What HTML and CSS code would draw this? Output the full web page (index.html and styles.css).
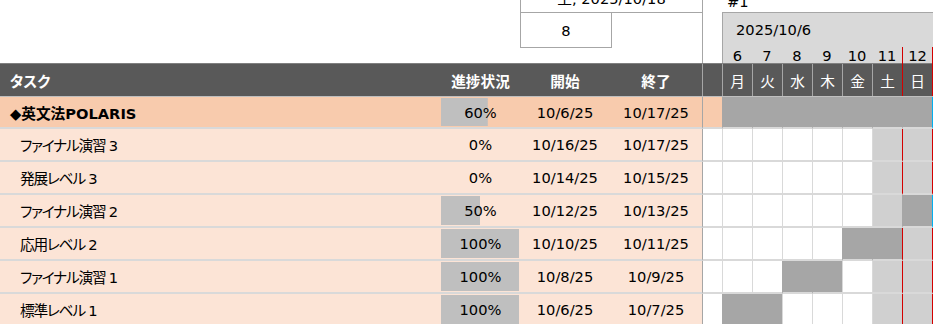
FILE: index.html
```html
<!DOCTYPE html>
<html lang="ja">

<head>
    <meta charset="UTF-8">
    <meta name="viewport" content="width=device-width, initial-scale=1.0">
    <title>ガントチャート</title>
    <link rel="stylesheet" href="styles.css">
</head>

<body>
    <div class="sheet">
        <div class="top">
            <div class="info">
                <div class="info-date"><span>土, 2025/10/18</span></div>
                <div class="info-count">8</div>
            </div>
            <div class="cal">
                <div class="cal-id"><span>#1</span></div>
                <div class="cal-box">
                    <div class="cal-start">2025/10/6</div>
                    <div class="cal-days">
                        <span>6</span><span>7</span><span>8</span><span>9</span><span>10</span><span>11</span><span class="sun">12</span>
                    </div>
                </div>
            </div>
        </div>

        <div class="row head">
            <div class="task">タスク</div>
            <div class="pct">進捗状況</div>
            <div class="date">開始</div>
            <div class="date">終了</div>
            <div class="gap"></div>
            <div class="day">月</div>
            <div class="day">火</div>
            <div class="day">水</div>
            <div class="day">木</div>
            <div class="day">金</div>
            <div class="day">土</div>
            <div class="day sun">日</div>
        </div>

        <div class="row parent">
            <div class="task">◆英文法POLARIS</div>
            <div class="pct" style="--p: 60">60%</div>
            <div class="date">10/6/25</div>
            <div class="date">10/17/25</div>
            <div class="gap"></div>
            <div class="day on"></div>
            <div class="day on"></div>
            <div class="day on"></div>
            <div class="day on"></div>
            <div class="day on"></div>
            <div class="day we on"></div>
            <div class="day we sun on"></div>
        </div>

        <div class="row">
            <div class="task">ファイナル演習 3</div>
            <div class="pct" style="--p: 0">0%</div>
            <div class="date">10/16/25</div>
            <div class="date">10/17/25</div>
            <div class="gap"></div>
            <div class="day"></div>
            <div class="day"></div>
            <div class="day"></div>
            <div class="day"></div>
            <div class="day"></div>
            <div class="day we"></div>
            <div class="day we sun"></div>
        </div>

        <div class="row">
            <div class="task">発展レベル 3</div>
            <div class="pct" style="--p: 0">0%</div>
            <div class="date">10/14/25</div>
            <div class="date">10/15/25</div>
            <div class="gap"></div>
            <div class="day"></div>
            <div class="day"></div>
            <div class="day"></div>
            <div class="day"></div>
            <div class="day"></div>
            <div class="day we"></div>
            <div class="day we sun"></div>
        </div>

        <div class="row">
            <div class="task">ファイナル演習 2</div>
            <div class="pct" style="--p: 50">50%</div>
            <div class="date">10/12/25</div>
            <div class="date">10/13/25</div>
            <div class="gap"></div>
            <div class="day"></div>
            <div class="day"></div>
            <div class="day"></div>
            <div class="day"></div>
            <div class="day"></div>
            <div class="day we"></div>
            <div class="day we sun on"></div>
        </div>

        <div class="row">
            <div class="task">応用レベル 2</div>
            <div class="pct" style="--p: 100">100%</div>
            <div class="date">10/10/25</div>
            <div class="date">10/11/25</div>
            <div class="gap"></div>
            <div class="day"></div>
            <div class="day"></div>
            <div class="day"></div>
            <div class="day"></div>
            <div class="day on"></div>
            <div class="day we on"></div>
            <div class="day we sun"></div>
        </div>

        <div class="row">
            <div class="task">ファイナル演習 1</div>
            <div class="pct" style="--p: 100">100%</div>
            <div class="date">10/8/25</div>
            <div class="date">10/9/25</div>
            <div class="gap"></div>
            <div class="day"></div>
            <div class="day"></div>
            <div class="day on"></div>
            <div class="day on"></div>
            <div class="day"></div>
            <div class="day we"></div>
            <div class="day we sun"></div>
        </div>

        <div class="row">
            <div class="task">標準レベル 1</div>
            <div class="pct" style="--p: 100">100%</div>
            <div class="date">10/6/25</div>
            <div class="date">10/7/25</div>
            <div class="gap"></div>
            <div class="day on"></div>
            <div class="day on"></div>
            <div class="day"></div>
            <div class="day"></div>
            <div class="day"></div>
            <div class="day we"></div>
            <div class="day we sun"></div>
        </div>
    </div>
</body>

</html>
```

FILE: styles.css
```css
* {
    box-sizing: border-box;
}

html,
body {
    margin: 0;
    background: #fff;
}

body {
    font: 14.67px "DejaVu Sans", "Noto Sans CJK JP", sans-serif;
    font-feature-settings: "palt";
    color: #000;
}

.sheet {
    width: 933px;
    height: 324px;
    overflow: hidden;
}

/* info cells and calendar heading above the table */
.top {
    display: flex;
    height: 63px;
}

.info {
    margin-left: 520px;
    width: 183px;
    border-right: 1px solid #a6a6a6;
}

.info-date {
    height: 13px;
    overflow: hidden;
    text-align: center;
    border-left: 1px solid #a6a6a6;
    border-bottom: 1px solid #a6a6a6;
}

.info-date span {
    display: block;
    line-height: 18px;
    margin-top: -10px;
}

.info-count {
    display: flex;
    align-items: center;
    justify-content: center;
    width: 92px;
    height: 35px;
    border: 1px solid #a6a6a6;
    border-top: none;
}

.cal {
    margin-left: 19px;
    width: 211px;
}

.cal-id {
    height: 12px;
    overflow: hidden;
    padding-left: 5px;
}

.cal-id span {
    display: block;
    line-height: 18px;
    margin-top: -7px;
}

.cal-box {
    height: 51px;
    background: #d9d9d9;
    border-top: 1px solid #a6a6a6;
    border-left: 1px solid #a6a6a6;
}

.cal-start {
    height: 34px;
    line-height: 34px;
    padding-left: 13px;
}

.cal-days {
    display: grid;
    grid-template-columns: 29px repeat(5, 30px) 31px;
    height: 16px;
    line-height: 18px;
    text-align: center;
}

.cal-days .sun {
    border-left: 1px solid #d40000;
    border-right: 1px solid #d40000;
}

/* table rows */
.row {
    display: grid;
    grid-template-columns: 441px 79px 90px 92px 20px repeat(6, 30px) 31px;
    height: 33px;
}

.row > div {
    display: flex;
    align-items: center;
    white-space: nowrap;
    background-color: #fce4d6;
    border-bottom: 2px solid #d9d9d9;
}

.row.parent {
    height: 32px;
}

.row.parent > div {
    background-color: #f8cbad;
}

.task {
    padding-left: 20px;
    letter-spacing: -1.2px;
}

.parent .task {
    padding-left: 10px;
    font-weight: bold;
    letter-spacing: 0;
}

.pct,
.date {
    justify-content: center;
}

.pct {
    background-image: linear-gradient(#bfbfbf, #bfbfbf);
    background-repeat: no-repeat;
    background-position: 0 1px;
    background-size: calc(0.78px * var(--p, 0)) calc(100% - 2px);
}

.row > .gap {
    background-color: #fff;
    border-left: 1px solid #a6a6a6;
}

.row > .day {
    justify-content: center;
    background-color: #fff;
    border-left: 1px solid #d9d9d9;
}

.row > .day.we {
    background-color: #d0d0d0;
}

.row > .day.sun {
    border-left-color: #d40000;
    border-right: 1px solid #d40000;
}

.row > .day.on {
    background-color: #a6a6a6;
    border-left-color: #a6a6a6;
}

.row > .day.sun.on {
    border-right-color: #00b0f0;
}

/* dark heading row */
.row.head {
    height: 34px;
    color: #fff;
    font-weight: bold;
    background: #595959;
    border-top: 1px solid #808080;
    border-bottom: 1px solid #bfbfbf;
}

.row.head > div {
    background-color: transparent;
    background-image: none;
    border-bottom: none;
}

.head .task {
    padding-left: 10px;
    letter-spacing: 0;
}

.row.head > .day {
    font-weight: normal;
    border-left-color: #a6a6a6;
}

.row.head > .day.sun {
    border-left-color: #d40000;
}
```
